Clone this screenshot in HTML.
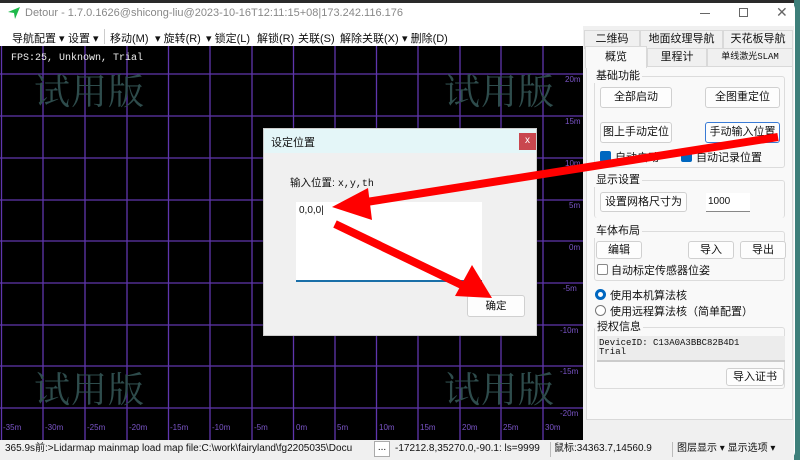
<!DOCTYPE html>
<html><head><meta charset="utf-8"><style>
*{margin:0;padding:0;box-sizing:border-box}
body{width:800px;height:460px;overflow:hidden;background:#fff;font-family:"Liberation Sans","Noto Sans CJK SC",sans-serif;font-size:11px;color:#111;position:relative}
.a{position:absolute;white-space:nowrap}
.btn{position:absolute;background:#fdfdfd;border:1px solid #d0d0d0;border-radius:3px;text-align:center;font-size:11px;line-height:19px;white-space:nowrap}
.grp{position:absolute;border:1px solid #dcdcdc;border-radius:3px}
.gl{position:absolute;background:#f9f9f9;padding:0 2px;font-size:11px;line-height:14px}
.tab{position:absolute;border:1px solid #d9d9d9;background:#f0f0f0;text-align:center;line-height:17px;font-size:11px;white-space:nowrap}
.wm{position:absolute;font-family:"Noto Serif CJK SC",serif;font-size:36px;color:#2e4c4c;letter-spacing:1px}
.lab{position:absolute;color:#7b55c8;font-family:"Liberation Sans",sans-serif;font-size:8px}
.chk{position:absolute;width:11px;height:11px;border-radius:2px;background:#0067c0}
.m{position:absolute;top:30px;font-size:11px}
</style></head><body>
<div class="a" style="left:0;top:0;width:800px;height:3px;background:#2a2a2a"></div>
<div class="a" style="left:794px;top:0;width:6px;height:460px;background:#3d7f7a"></div>
<div class="a" style="left:0;top:3px;width:795px;height:455px;background:#fff;border-radius:6px"></div>
<svg class="a" style="left:7px;top:6px" width="14" height="14" viewBox="0 0 14 14"><path d="M1 6 L13 1 L8 13 L7 7 Z" fill="#1db94a"/></svg>
<div class="a" style="left:25px;top:7px;font-size:11px;color:#888">Detour - 1.7.0.1626@shicong-liu@2023-10-16T12:11:15+08|173.242.116.176</div>
<div class="a" style="left:700px;top:13px;width:10px;height:1px;background:#666"></div>
<div class="a" style="left:739px;top:8px;width:9px;height:9px;border:1px solid #666"></div>
<div class="a" style="left:776px;top:4px;font-size:14px;color:#666">✕</div>
<div class="m" style="left:12px">导航配置 ▾</div>
<div class="m" style="left:68px">设置 ▾</div>
<div class="a" style="left:104px;top:29px;width:1px;height:15px;background:#ccc"></div>
<div class="m" style="left:110px">移动(M)</div>
<div class="m" style="left:155px">▾ 旋转(R)</div>
<div class="m" style="left:206px">▾ 锁定(L)</div>
<div class="m" style="left:257px">解锁(R)</div>
<div class="m" style="left:298px">关联(S)</div>
<div class="m" style="left:340px">解除关联(X)</div>
<div class="m" style="left:402px">▾ 删除(D)</div>
<div class="a" style="left:0;top:46px;width:583px;height:394px;background:#000;overflow:hidden">
<svg width="583" height="394" style="position:absolute;left:0;top:0">
<g stroke="#5f36ad" stroke-width="1.3">
<line x1="1.5" y1="0" x2="1.5" y2="394"/><line x1="43" y1="0" x2="43" y2="394"/><line x1="85" y1="0" x2="85" y2="394"/><line x1="127" y1="0" x2="127" y2="394"/><line x1="168.5" y1="0" x2="168.5" y2="394"/><line x1="210" y1="0" x2="210" y2="394"/><line x1="252" y1="0" x2="252" y2="394"/><line x1="293.5" y1="0" x2="293.5" y2="394"/><line x1="335" y1="0" x2="335" y2="394"/><line x1="376.5" y1="0" x2="376.5" y2="394"/><line x1="418" y1="0" x2="418" y2="394"/><line x1="460" y1="0" x2="460" y2="394"/><line x1="501" y1="0" x2="501" y2="394"/><line x1="543" y1="0" x2="543" y2="394"/>
<line x1="0" y1="28" x2="583" y2="28"/><line x1="0" y1="70" x2="583" y2="70"/><line x1="0" y1="112" x2="583" y2="112"/><line x1="0" y1="154" x2="583" y2="154"/><line x1="0" y1="195" x2="583" y2="195"/><line x1="0" y1="237" x2="583" y2="237"/><line x1="0" y1="279" x2="583" y2="279"/><line x1="0" y1="320" x2="583" y2="320"/><line x1="0" y1="362" x2="583" y2="362"/>
</g></svg>
<div class="a" style="left:11px;top:7px;color:#eee;font-family:'Liberation Mono',monospace;font-size:10px">FPS:25, Unknown, Trial</div>
<div class="wm" style="left:34px;top:18px">试用版</div>
<div class="wm" style="left:444px;top:18px">试用版</div>
<div class="wm" style="left:34px;top:316px">试用版</div>
<div class="wm" style="left:444px;top:316px">试用版</div>
<div class="lab" style="left:565px;top:29px">20m</div>
<div class="lab" style="left:565px;top:71px">15m</div>
<div class="lab" style="left:565px;top:113px">10m</div>
<div class="lab" style="left:569px;top:155px">5m</div>
<div class="lab" style="left:569px;top:197px">0m</div>
<div class="lab" style="left:563px;top:238px">-5m</div>
<div class="lab" style="left:560px;top:280px">-10m</div>
<div class="lab" style="left:560px;top:321px">-15m</div>
<div class="lab" style="left:560px;top:363px">-20m</div>
<div class="lab" style="left:3px;top:377px">-35m</div><div class="lab" style="left:45px;top:377px">-30m</div><div class="lab" style="left:87px;top:377px">-25m</div><div class="lab" style="left:129px;top:377px">-20m</div><div class="lab" style="left:170px;top:377px">-15m</div><div class="lab" style="left:212px;top:377px">-10m</div><div class="lab" style="left:254px;top:377px">-5m</div><div class="lab" style="left:296px;top:377px">0m</div><div class="lab" style="left:337px;top:377px">5m</div><div class="lab" style="left:379px;top:377px">10m</div><div class="lab" style="left:420px;top:377px">15m</div><div class="lab" style="left:462px;top:377px">20m</div><div class="lab" style="left:503px;top:377px">25m</div><div class="lab" style="left:545px;top:377px">30m</div>
</div>
<div class="a" style="left:583px;top:26px;width:211px;height:414px;background:#f0f0f0"></div>
<div class="tab" style="left:584px;top:30px;width:56px;height:19px">二维码</div>
<div class="tab" style="left:640px;top:30px;width:83px;height:19px">地面纹理导航</div>
<div class="tab" style="left:723px;top:30px;width:70px;height:19px">天花板导航</div>
<div class="tab" style="left:647px;top:48px;width:60px;height:19px">里程计</div>
<div class="tab" style="left:707px;top:48px;width:86px;height:19px;font-size:9px;font-family:'Liberation Mono','Noto Sans CJK SC',monospace">单线激光SLAM</div>
<div class="a" style="left:586px;top:66px;width:207px;height:354px;background:#f9f9f9;border:1px solid #d9d9d9"></div>
<div class="tab" style="left:585px;top:46px;width:62px;height:22px;background:#f9f9f9;border-bottom:none;line-height:20px">概览</div>
<div class="grp" style="left:594px;top:76px;width:191px;height:92px"></div>
<div class="gl" style="left:594px;top:69px">基础功能</div>
<div class="btn" style="left:600px;top:87px;width:72px;height:21px">全部启动</div>
<div class="btn" style="left:705px;top:87px;width:75px;height:21px">全图重定位</div>
<div class="btn" style="left:600px;top:122px;width:72px;height:21px">图上手动定位</div>
<div class="btn" style="left:705px;top:122px;width:75px;height:21px;border-color:#3a7bd5">手动输入位置</div>
<div class="chk" style="left:600px;top:151px"></div><div class="a" style="left:615px;top:149px">自动启动</div>
<div class="chk" style="left:681px;top:151px"></div><div class="a" style="left:696px;top:149px">自动记录位置</div>
<div class="grp" style="left:594px;top:180px;width:191px;height:38px;border-bottom:none"></div>
<div class="gl" style="left:594px;top:173px">显示设置</div>
<div class="btn" style="left:600px;top:192px;width:87px;height:20px">设置网格尺寸为</div>
<div class="a" style="left:706px;top:193px;width:44px;height:19px;background:#fff;border-bottom:1px solid #888;font-size:10px;padding:3px 2px">1000</div>
<div class="grp" style="left:594px;top:231px;width:191px;height:50px"></div>
<div class="gl" style="left:594px;top:224px">车体布局</div>
<div class="btn" style="left:596px;top:241px;width:46px;height:18px;line-height:16px">编辑</div>
<div class="btn" style="left:688px;top:241px;width:46px;height:18px;line-height:16px">导入</div>
<div class="btn" style="left:740px;top:241px;width:46px;height:18px;line-height:16px">导出</div>
<div class="a" style="left:597px;top:264px;width:11px;height:11px;border:1px solid #888;border-radius:2px;background:#fff"></div><div class="a" style="left:611px;top:262px">自动标定传感器位姿</div>
<div class="a" style="left:595px;top:289px;width:11px;height:11px;border-radius:50%;border:3.5px solid #0067c0;background:#fff"></div><div class="a" style="left:610px;top:287px">使用本机算法核</div>
<div class="a" style="left:595px;top:305px;width:11px;height:11px;border-radius:50%;border:1px solid #777;background:#fff"></div><div class="a" style="left:610px;top:303px">使用远程算法核（简单配置）</div>
<div class="grp" style="left:594px;top:327px;width:191px;height:62px"></div>
<div class="gl" style="left:595px;top:320px">授权信息</div>
<div class="a" style="left:597px;top:336px;width:188px;height:26px;background:#ececec;border-bottom:2px solid #ccc;font-family:'Liberation Mono',monospace;font-size:9px;line-height:9px;padding:3px 2px">DeviceID: C13A0A3BBC82B4D1<br>Trial</div>
<div class="btn" style="left:726px;top:368px;width:58px;height:18px;line-height:16px">导入证书</div>
<div class="a" style="left:0;top:440px;width:794px;height:20px;background:#f0f0f0;font-size:10px;line-height:18px">
<span class="a" style="left:5px;width:366px;overflow:hidden">365.9s前:>Lidarmap mainmap load map file:C:\work\fairyland\fg2205035\Docu</span>
<span class="a" style="left:374px;top:1px;width:16px;height:16px;border:1px solid #aaa;background:#fff;line-height:11px;text-align:center">...</span>
<span class="a" style="left:395px">-17212.8,35270.0,-90.1: ls=9999</span>
<span class="a" style="left:550px;top:2px;width:1px;height:15px;background:#bbb"></span>
<span class="a" style="left:554px">鼠标:34363.7,14560.9</span>
<span class="a" style="left:672px;top:2px;width:1px;height:15px;background:#bbb"></span>
<span class="a" style="left:677px">图层显示 ▾ 显示选项 ▾</span>
</div>
<div class="a" style="left:263px;top:128px;width:274px;height:208px;background:#f0f0f0;border:1px solid #ccc;box-shadow:0 0 4px rgba(0,0,0,.3)">
<div class="a" style="left:0;top:0;width:272px;height:24px;background:#e4f6f8"></div>
<div class="a" style="left:7px;top:5px;font-size:11px">设定位置</div>
<div class="a" style="left:255px;top:4px;width:17px;height:17px;background:#c9474f;color:#fff;font-size:10px;text-align:center;line-height:16px">x</div>
<div class="a" style="left:26px;top:46px;font-size:10.5px">输入位置: <span style="font-family:'Liberation Mono',monospace;font-size:10px">x,y,th</span></div>
<div class="a" style="left:32px;top:73px;width:186px;height:80px;background:#fff;border-bottom:2px solid #1a6fa8;font-size:10px;padding:3px 3px">0,0,0|</div>
<div class="btn" style="left:203px;top:166px;width:58px;height:22px;line-height:20px;font-size:10.5px">确定</div>
</div>
<svg class="a" style="left:0;top:0" width="800" height="460">
<g fill="#ff0000" stroke="#ff0000">
<line x1="778" y1="137" x2="360" y2="203" stroke-width="8"/>
<polygon points="332,207 368,188 372,220" stroke="none"/>
<line x1="335" y1="224" x2="468" y2="288" stroke-width="8"/>
<polygon points="492,298 455,296 472,265" stroke="none"/>
</g></svg>
</body></html>
